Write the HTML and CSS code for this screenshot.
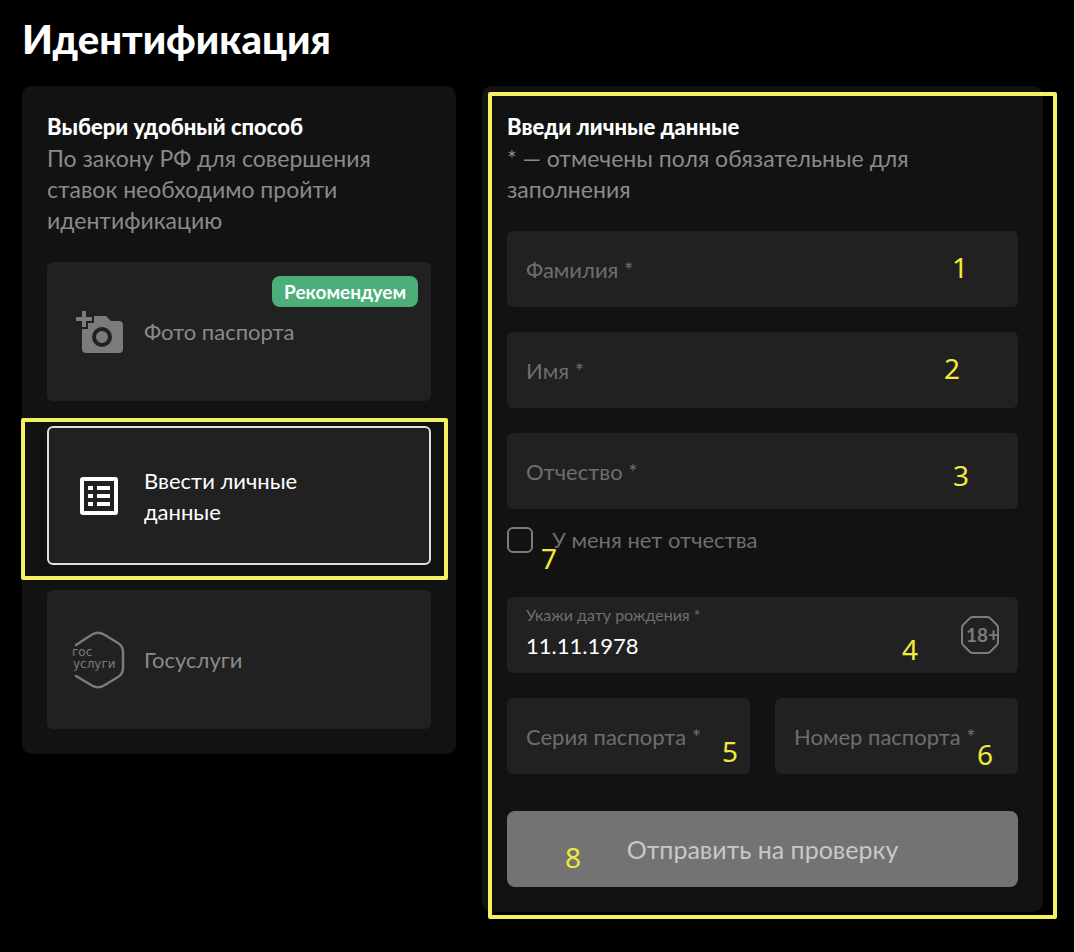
FILE: index.html
```html
<!DOCTYPE html>
<html lang="ru">
<head>
    <meta charset="UTF-8">
    <meta name="viewport" content="width=device-width, initial-scale=1.0">
    <title>Идентификация</title>
    <link rel="stylesheet" href="styles.css">
</head>
<body>

    <h1>Идентификация</h1>

    <main class="columns">
        <section class="panel">
            <h2>Выбери удобный способ</h2>
            <p class="intro">По закону РФ для совершения ставок необходимо пройти идентификацию</p>

            <div class="options">
                <button type="button" class="option">
                    <svg class="option-icon" viewBox="0 0 54 58" aria-hidden="true">
                        <path fill="#7b7b7b" d="M22 13H34L39 18H47Q51 18 51 22V46Q51 50 47 50H14Q10 50 10 46V26H16V20H22z"/>
                        <circle cx="30" cy="34" r="8" fill="none" stroke="#212121" stroke-width="4"/>
                        <path fill="none" stroke="#7b7b7b" stroke-width="4" d="M4 16h16M12 8v16"/>
                    </svg>
                    <span>Фото паспорта</span>
                    <span class="badge">Рекомендуем</span>
                </button>

                <button type="button" class="option active">
                    <svg class="option-icon" viewBox="0 0 54 58" aria-hidden="true">
                        <rect x="10" y="12" width="34" height="34" rx="1" fill="none" stroke="#fff" stroke-width="4"/>
                        <path fill="none" stroke="#fff" stroke-width="4" d="M16 21h5M16 29h5M16 37h5M25 21h13M25 29h13M25 37h13"/>
                    </svg>
                    <span>Ввести личные данные</span>
                    <span class="frame frame-option"></span>
                </button>

                <button type="button" class="option">
                    <svg class="option-icon" viewBox="0 0 54 58" aria-hidden="true">
                        <path fill="none" stroke="#7b7b7b" stroke-width="2.500" stroke-linecap="round" d="M4 14L20 3.500Q26 0 32 3.500L46 12Q51 15 51 21V37Q51 43 46 46L32 54.500Q26 58 20 54.500L4 45"/>
                        <text class="logo-text" x="0" y="25">гос</text>
                        <text class="logo-text" x="1" y="37">услуги</text>
                    </svg>
                    <span>Госуслуги</span>
                </button>
            </div>
        </section>

        <section class="panel panel-form">
            <h2>Введи личные данные</h2>
            <p class="intro">* — отмечены поля обязательные для заполнения</p>

            <form class="form">
                <label class="field">
                    <span class="caption">Фамилия *</span>
                    <input type="text" name="surname">
                    <span class="mark mark-1">1</span>
                </label>
                <label class="field">
                    <span class="caption">Имя *</span>
                    <input type="text" name="name">
                    <span class="mark mark-2">2</span>
                </label>
                <label class="field">
                    <span class="caption">Отчество *</span>
                    <input type="text" name="patronymic">
                    <span class="mark mark-3">3</span>
                </label>

                <label class="check">
                    <input type="checkbox" name="no-patronymic">
                    <span>У меня нет отчества</span>
                    <span class="mark mark-7">7</span>
                </label>

                <label class="field filled">
                    <span class="caption">Укажи дату рождения *</span>
                    <input type="text" name="birthday" value="11.11.1978">
                    <svg class="age" viewBox="0 0 40 40" aria-hidden="true">
                        <path fill="none" stroke="#7b7b7b" stroke-width="2" d="M13 2H27Q29 2 30 3L37 10Q38 11 38 13V27Q38 29 37 30L30 37Q29 38 27 38H13Q11 38 10 37L3 30Q2 29 2 27V13Q2 11 3 10L10 3Q11 2 13 2z"/>
                        <text class="age-text" x="6" y="27">18+</text>
                    </svg>
                    <span class="mark mark-4">4</span>
                </label>

                <div class="row">
                    <label class="field">
                        <span class="caption">Серия паспорта *</span>
                        <input type="text" name="series">
                        <span class="mark mark-5">5</span>
                    </label>
                    <label class="field">
                        <span class="caption">Номер паспорта *</span>
                        <input type="text" name="number">
                        <span class="mark mark-6">6</span>
                    </label>
                </div>

                <button type="submit" class="submit">
                    Отправить на проверку
                    <span class="mark mark-8">8</span>
                </button>
            </form>
            <span class="frame frame-form"></span>
        </section>
    </main>

</body>
</html>
```
FILE: styles.css
```css
* {
    box-sizing: border-box;
}
body {
    margin: 0;
    padding: 15px 31px 32px 22px;
    background-color: #000;
    color: #8a8a8a;
    font-family: Lato, sans-serif;
    font-size: 22px;
    line-height: 31px;
}
h1 {
    margin: 0 0 23px;
    color: #fff;
    font-size: 40px;
    font-weight: 900;
    line-height: 48px;
}
h2 {
    margin: 0;
    color: #fff;
    font-size: 22px;
    font-weight: 900;
    line-height: 32px;
}
button, input {
    font: inherit;
}

/* Panels */
.columns {
    display: grid;
    grid-template-columns: 434fr 561fr;
    gap: 26px;
    align-items: start;
}
.panel {
    position: relative;
    padding: 25px;
    border-radius: 10px;
    background-color: #121212;
}
.intro {
    margin: 0 0 26px;
    padding-right: 50px;
    font-size: 23px;
}
.panel-form .intro {
    padding-right: 80px;
}

/* Left column */
.options {
    display: grid;
    gap: 25px;
}
.option {
    position: relative;
    display: flex;
    align-items: center;
    gap: 18px;
    height: 139px;
    padding: 0 100px 0 23px;
    border: 2px solid transparent;
    border-radius: 6px;
    background-color: #212121;
    color: #8a8a8a;
    text-align: left;
    cursor: pointer;
}
.option.active {
    border-color: #e0e0e0;
    color: #fff;
}
.option-icon {
    flex: none;
    width: 54px;
    height: 58px;
}
.logo-text {
    fill: #7b7b7b;
    font-family: "DejaVu Sans", sans-serif;
    font-size: 12px;
}
.badge {
    position: absolute;
    top: 12px;
    right: 11px;
    padding: 0 12px;
    border-radius: 8px;
    background-color: #4caf7a;
    color: #fff;
    font-size: 19px;
    font-weight: 700;
}

/* Form */
.form {
    display: grid;
    gap: 25px;
}
.field {
    position: relative;
    display: grid;
    align-items: center;
    height: 76px;
    border-radius: 6px;
    background-color: #212121;
    color: #6e6e6e;
}
.field .caption,
.field input {
    grid-area: 1 / 1;
}
.caption {
    padding-left: 19px;
}
.field input {
    width: 100%;
    height: 100%;
    padding: 0 19px;
    border: none;
    outline: none;
    background: transparent;
    color: #fff;
}
.filled .caption {
    align-self: start;
    padding-top: 8px;
    font-size: 16px;
    line-height: 20px;
}
.filled input {
    padding-top: 20px;
}
.age {
    position: absolute;
    top: 18px;
    right: 18px;
    width: 40px;
    height: 40px;
}
.age-text {
    fill: #7b7b7b;
    font-family: Lato, sans-serif;
    font-size: 19px;
    font-weight: 700;
}
.check {
    position: relative;
    display: flex;
    align-items: center;
    gap: 19px;
    margin: -10px 0 17px;
    color: #6e6e6e;
}
.check input {
    appearance: none;
    width: 26px;
    height: 26px;
    margin: 0;
    border: 2px solid #7b7b7b;
    border-radius: 6px;
}
.row {
    display: grid;
    grid-template-columns: 1fr 1fr;
    gap: 25px;
}
.submit {
    position: relative;
    height: 76px;
    margin-top: 12px;
    border: none;
    border-radius: 8px;
    background-color: #737373;
    color: #c8c8c8;
    font-size: 25px;
    cursor: pointer;
}

/* Yellow callouts over the page */
.frame {
    position: absolute;
    border: 4px solid #f5f163;
    border-radius: 2px;
    pointer-events: none;
}
.frame-option {
    inset: -10px -19px -17px -28px;
}
.frame-form {
    inset: 6px -14px -7px 6px;
}
.mark {
    position: absolute;
    color: #f0ea3c;
    font-family: "Noto Sans", sans-serif;
    font-size: 28px;
    line-height: 32px;
    pointer-events: none;
}
.mark-1 {
    top: 20px;
    right: 50px;
}
.mark-2 {
    top: 20px;
    right: 58px;
}
.mark-3 {
    top: 26px;
    right: 49px;
}
.mark-4 {
    top: 36px;
    right: 100px;
}
.mark-5 {
    top: 37px;
    right: 12px;
}
.mark-6 {
    top: 40px;
    right: 25px;
}
.mark-7 {
    top: 18px;
    left: 34px;
}
.mark-8 {
    top: 30px;
    left: 58px;
}
```
